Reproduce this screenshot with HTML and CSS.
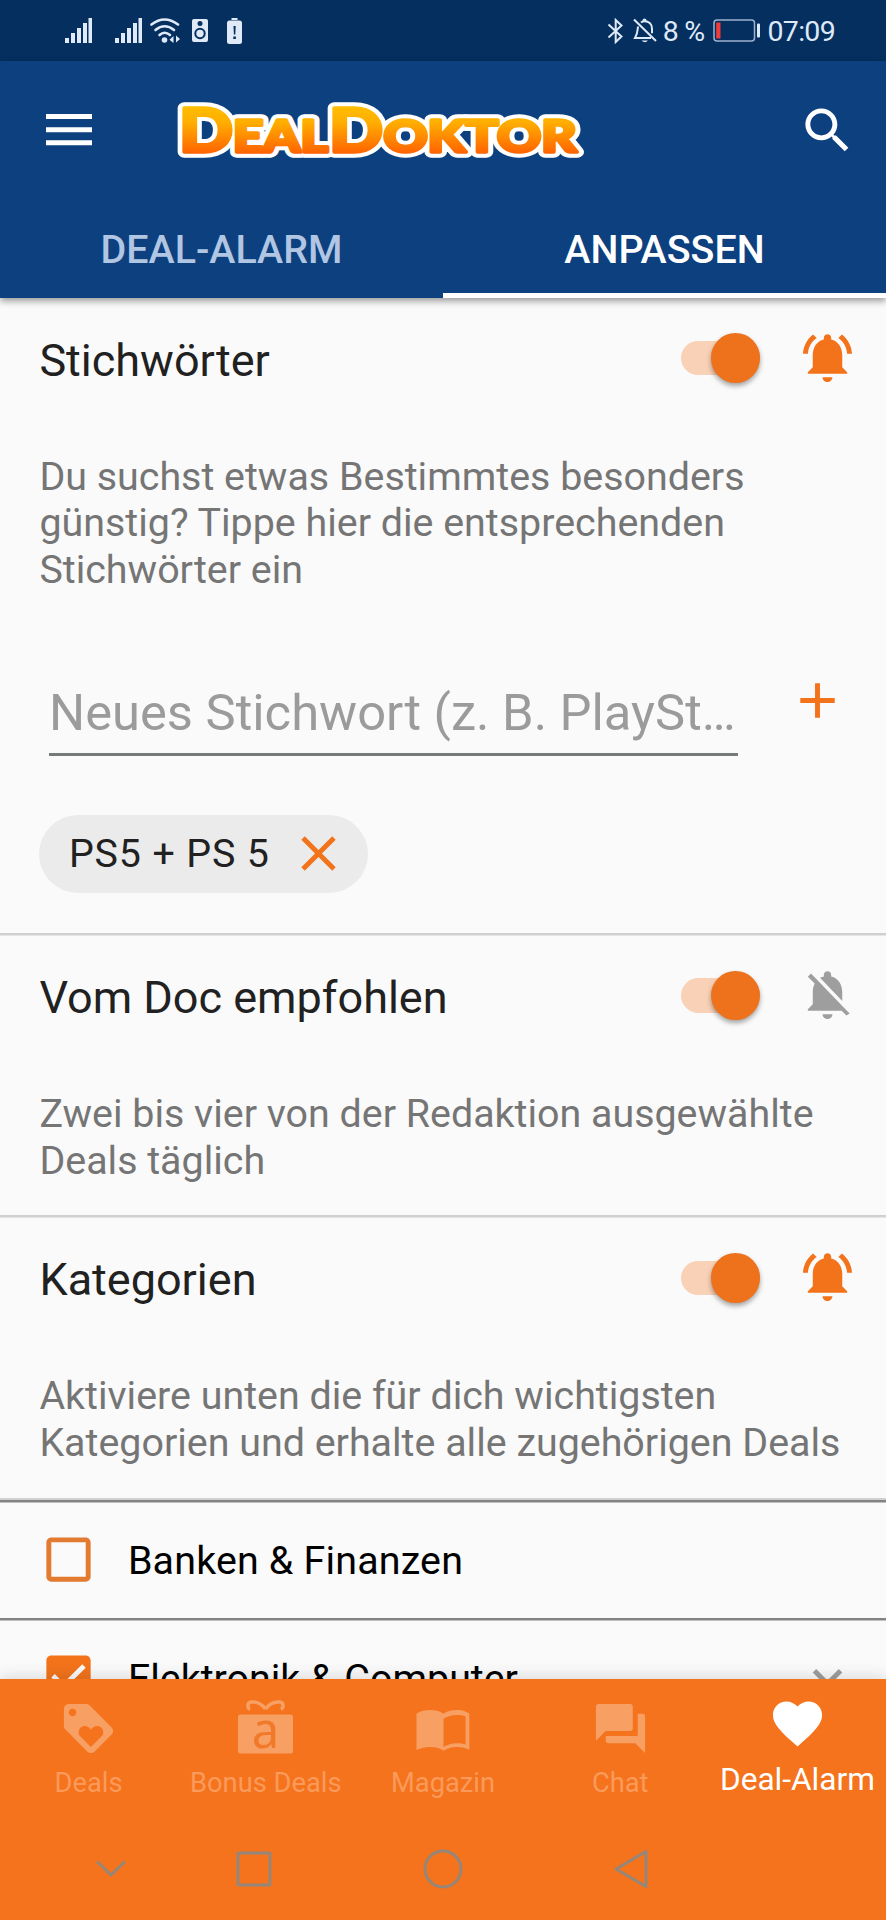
FILE: index.html
```html
<!DOCTYPE html>
<html lang="de">
<head>
<meta charset="utf-8">
<title>DealDoktor – Deal-Alarm</title>
<link rel="stylesheet" href="styles.css">
</head>
<body>
<svg class="defs" width="0" height="0" aria-hidden="true">
  <symbol id="bell-active" viewBox="0 0 24 24"><path d="M7.58 4.08L6.15 2.65C3.75 4.48 2.17 7.3 2.03 10.5h2c.15-2.65 1.51-4.97 3.55-6.42zm12.39 6.42h2c-.15-3.2-1.73-6.02-4.12-7.85l-1.42 1.43c2.02 1.45 3.39 3.77 3.54 6.42zM18 11c0-3.07-1.64-5.64-4.5-6.32V4c0-.83-.67-1.5-1.5-1.5s-1.5.67-1.5 1.5v.68C7.63 5.36 6 7.92 6 11v5l-2 2v.6h16V18l-2-2v-5zm-6 11c.14 0 .27-.01.4-.04.65-.14 1.18-.58 1.44-1.18.1-.24.15-.5.15-.78h-4c.01 1.1.9 2 2.01 2z"/></symbol>
  <symbol id="bell-off" viewBox="0 0 24 24"><path d="M20 18.69L7.84 6.14 5.27 3.49 4 4.76l2.8 2.8v.01c-.52.99-.8 2.16-.8 3.42v5l-2 2v.6h13.73l2 2L21 19.72l-1-1.03zM12 22c1.11 0 2-.89 2-2h-4c0 1.11.89 2 2 2zm6-7.32V11c0-3.08-1.64-5.64-4.5-6.32V4c0-.83-.67-1.5-1.5-1.5s-1.5.67-1.5 1.5v.68c-.15.03-.29.08-.42.12-.1.03-.2.07-.3.11h-.01c-.01 0-.01 0-.02.01-.23.09-.46.2-.68.31 0 0-.01 0-.01.01L18 14.68z"/></symbol>
  <symbol id="signal" viewBox="0 0 27 25"><path d="M0 20h4v5H0zM6 15h4v10H6zM12 10h4v15h-4zM18 5h4v20h-4zM23.500 0h3.500v25h-3.500z"/></symbol>
</svg>
<div class="screen">
  <div class="statusbar">
    <svg class="st-signal" viewBox="0 0 27 25"><use href="#signal"/></svg>
    <svg class="st-signal st-signal-2" viewBox="0 0 27 25"><use href="#signal"/></svg>
    <svg class="st-wifi" viewBox="0 0 30 25"><g fill="none" stroke="#dfe9f7" stroke-width="2.600" stroke-linecap="round"><path d="M1.500 6.500Q14.500-3.500 28 6.500"/><path d="M5.500 12Q14.500 4.500 24 12"/><path d="M9.500 17Q14.500 12.500 20 17"/></g><circle cx="14.500" cy="22" r="2.800" fill="#dfe9f7"/><path d="M23.500 18v7l-4-3.200zM26 17.500v7l4-3.500z" fill="#dfe9f7"/></svg>
    <svg class="st-speaker" viewBox="0 0 16 23"><rect width="16" height="23" rx="2" fill="#dfe9f7"/><circle cx="8" cy="4.500" r="2.500" fill="#052f5f"/><circle cx="8" cy="14.500" r="4.700" fill="none" stroke="#052f5f" stroke-width="2"/></svg>
    <svg class="st-batt-alert" viewBox="0 0 15 26"><path d="M4.500 0h6v2h-6z" fill="#dfe9f7"/><rect y="2.500" width="15" height="23.500" rx="2.500" fill="#dfe9f7"/><path d="M6.500 8h2.200l-.4 8.500H6.900zM6.300 18.500h2.600v2.500H6.300z" fill="#052f5f"/></svg>
    <span class="st-space"></span>
    <svg class="st-bt" viewBox="0 0 16 26"><path d="M1 6.500l13 12L8.200 24V2L14 7.500 1 19.500" fill="none" stroke="#dfe9f7" stroke-width="2"/></svg>
    <svg class="st-mute" viewBox="0 0 24 26"><g fill="none" stroke="#dfe9f7" stroke-width="2"><path d="M1 1.500L23 23"/><path d="M8 4.500C9 3.500 10 3.200 11.500 3.200c4.500 0 7.500 3 7.500 7.500v4.500M5 8.500c-.6 6.500-.5 7.500-3 11.500h16"/><path d="M10 3q1.500-3 3 0"/></g><path d="M8.500 22.500h6.500q-3 3.500-6.500 0z" fill="#dfe9f7"/></svg>
    <span class="st-pct">8&nbsp;%</span>
    <svg class="st-batt" viewBox="0 0 48 23"><rect x="1" y="1" width="40.500" height="21" rx="3" fill="none" stroke="#9fb3cf" stroke-width="1.500"/><rect x="3.200" y="3.500" width="4.300" height="16" fill="#ee3b3b"/><rect x="44" y="4.500" width="3" height="14" rx="1" fill="#dfe9f7"/></svg>
    <span class="st-time">07:09</span>
  </div>

  <header class="header">
    <div class="appbar">
      <svg class="menu" viewBox="0 0 46 32"><path d="M0 0h46v5H0zM0 13.200h46v5H0zM0 26.300h46v5H0z" fill="#fff"/></svg>
      <svg class="logo" viewBox="0 0 420 110">
        <defs>
          <linearGradient id="gold" gradientUnits="userSpaceOnUse" x1="0" y1="31" x2="0" y2="78"><stop offset="0" stop-color="#ffbe00"/><stop offset=".35" stop-color="#ffae00"/><stop offset="1" stop-color="#ff6400"/></linearGradient>
        </defs>
        <g class="logo-back">
          <text class="big" x="6" y="76.500" textLength="54" lengthAdjust="spacingAndGlyphs">D</text>
          <text class="small" x="60" y="76.500" textLength="95" lengthAdjust="spacingAndGlyphs">EAL</text>
          <text class="big" x="156" y="76.500" textLength="54" lengthAdjust="spacingAndGlyphs">D</text>
          <text class="small" x="210.500" y="76.500" textLength="193" lengthAdjust="spacingAndGlyphs">OKTOR</text>
        </g>
        <g class="logo-front" fill="url(#gold)" stroke="url(#gold)" aria-hidden="true">
          <text class="big" x="6" y="76.500" textLength="54" lengthAdjust="spacingAndGlyphs">D</text>
          <text class="small" x="60" y="76.500" textLength="95" lengthAdjust="spacingAndGlyphs">EAL</text>
          <text class="big" x="156" y="76.500" textLength="54" lengthAdjust="spacingAndGlyphs">D</text>
          <text class="small" x="210.500" y="76.500" textLength="193" lengthAdjust="spacingAndGlyphs">OKTOR</text>
        </g>
      </svg>
      <svg class="search" viewBox="0 0 24 24" fill="#fff"><path d="M15.500 14h-.79l-.28-.27C15.410 12.590 16 11.110 16 9.500 16 5.910 13.090 3 9.500 3S3 5.910 3 9.500 5.910 16 9.500 16c1.610 0 3.090-.59 4.230-1.570l.27.280v.79l5 4.990L20.490 19l-4.990-5zm-6 0C7.010 14 5 11.990 5 9.500S7.010 5 9.500 5 14 7.010 14 9.500 11.990 14 9.500 14z"/></svg>
    </div>
    <nav class="tabs">
      <div class="tab">DEAL-ALARM</div>
      <div class="tab tab-active">ANPASSEN</div>
    </nav>
  </header>

  <main class="content">
    <section class="section">
      <div class="section-head">
        <h2>Stichwörter</h2>
        <div class="switch"><span class="thumb"></span></div>
        <svg class="icon orange" viewBox="0 0 24 24"><use href="#bell-active"/></svg>
      </div>
      <p class="desc">Du suchst etwas Bestimmtes besonders<br>günstig? Tippe hier die entsprechenden<br>Stichwörter ein</p>
      <div class="entry">
        <div class="field">Neues Stichwort (z. B. PlaySt…</div>
        <svg class="icon orange add" viewBox="0 0 24 24"><path d="M19 13h-6v6h-2v-6H5v-2h6V5h2v6h6v2z"/></svg>
      </div>
      <div class="chip"><span>PS5 + PS 5</span><svg class="icon orange" viewBox="0 0 24 24"><path d="M19 6.410L17.590 5 12 10.590 6.410 5 5 6.410 10.590 12 5 17.590 6.410 19 12 13.410 17.590 19 19 17.590 13.410 12z"/></svg></div>
    </section>
    <section class="section">
      <div class="section-head">
        <h2>Vom Doc empfohlen</h2>
        <div class="switch"><span class="thumb"></span></div>
        <svg class="icon gray" viewBox="0 0 24 24"><use href="#bell-off"/></svg>
      </div>
      <p class="desc">Zwei bis vier von der Redaktion ausgewählte<br>Deals täglich</p>
    </section>
    <section class="section">
      <div class="section-head">
        <h2>Kategorien</h2>
        <div class="switch"><span class="thumb"></span></div>
        <svg class="icon orange" viewBox="0 0 24 24"><use href="#bell-active"/></svg>
      </div>
      <p class="desc">Aktiviere unten die für dich wichtigsten<br>Kategorien und erhalte alle zugehörigen Deals</p>
    </section>
    <div class="category">
      <svg class="icon check" viewBox="0 0 24 24"><path d="M19 5v14H5V5h14m0-2H5c-1.100 0-2 .9-2 2v14c0 1.100.9 2 2 2h14c1.100 0 2-.9 2-2V5c0-1.100-.9-2-2-2z"/></svg>
      <span class="spaced">Banken &amp; Finanzen</span>
    </div>
    <div class="category">
      <svg class="icon orange" viewBox="0 0 24 24"><path d="M19 3H5c-1.110 0-2 .9-2 2v14c0 1.100.89 2 2 2h14c1.110 0 2-.9 2-2V5c0-1.100-.89-2-2-2zm-9 14l-5-5 1.410-1.410L10 14.170l7.590-7.590L19 8l-9 9z"/></svg>
      <span>Elektronik &amp; Computer</span>
      <svg class="icon gray expand" viewBox="0 0 24 24"><path d="M16.590 8.590L12 13.170 7.410 8.590 6 10l6 6 6-6z"/></svg>
    </div>
  </main>

  <nav class="bottomnav">
    <div class="item"><svg class="icon" viewBox="0 0 24 24"><path d="M21.410 11.580l-9-9C12.050 2.220 11.550 2 11 2H4c-1.100 0-2 .9-2 2v7c0 .55.22 1.050.59 1.420l9 9c.36.360.86.580 1.410.580.550 0 1.050-.220 1.410-.590l7-7c.370-.360.590-.860.590-1.410 0-.550-.230-1.060-.590-1.420zM5.500 7C4.670 7 4 6.330 4 5.500S4.670 4 5.500 4 7 4.670 7 5.500 6.330 7 5.500 7zm11.770 8.270L13 19.540l-4.270-4.270C8.280 14.810 8 14.190 8 13.500c0-1.380 1.120-2.500 2.500-2.500.690 0 1.320.280 1.770.740l.730.720.730-.730c.450-.450 1.080-.730 1.770-.730 1.380 0 2.500 1.120 2.500 2.500 0 .690-.280 1.320-.730 1.770z"/></svg><span>Deals</span></div>
    <div class="item"><svg class="icon" viewBox="0 0 59 59"><rect x="2" y="15.500" width="55" height="39" rx="2.500"/><path d="M29.500 10C25 4 20 2.500 15.500 3c-5 .6-4 6-1.500 7.500" fill="none" stroke="currentColor" stroke-width="3.500"/><path d="M29.500 10C34 4 39 2.500 43.500 3c5 .6 4 6 1.500 7.500" fill="none" stroke="currentColor" stroke-width="3.500"/><text class="gift-a" x="29.500" y="49" text-anchor="middle">a</text></svg><span>Bonus Deals</span></div>
    <div class="item"><svg class="icon" viewBox="0 0 24 24"><path d="M21 5c-1.110-.350-2.330-.500-3.500-.500-1.950 0-4.050.400-5.500 1.500-1.450-1.100-3.550-1.500-5.500-1.500S2.450 4.900 1 6v14.650c.100.050 2.450-1.150 5.500-1.150 1.950 0 4.050.400 5.500 1.500 1.350-.850 3.800-1.500 5.500-1.500 1.650 0 3.350.300 4.750 1.050.100.050.250.050.250.050V6c-.600-.450-1.250-.750-2-1zm0 13.500c-1.100-.350-2.300-.500-3.500-.500-1.700 0-4.150.650-5.500 1.500V8c1.350-.850 3.800-1.500 5.500-1.500 1.200 0 2.400.150 3.500.500v11.500z"/></svg><span>Magazin</span></div>
    <div class="item"><svg class="icon" viewBox="0 0 24 24"><path d="M21 6h-2v9H6v2c0 .55.450 1 1 1h11l4 4V7c0-.550-.450-1-1-1zm-4 6V3c0-.550-.450-1-1-1H3c-.550 0-1 .450-1 1v14l4-4h10c.550 0 1-.450 1-1z"/></svg><span>Chat</span></div>
    <div class="item item-active"><svg class="icon" viewBox="0 0 24 24"><path d="M12 21.350l-1.450-1.320C5.400 15.360 2 12.280 2 8.500 2 5.420 4.420 3 7.500 3c1.740 0 3.410.810 4.500 2.090C13.090 3.810 14.760 3 16.500 3 19.580 3 22 5.420 22 8.500c0 3.780-3.400 6.860-8.550 11.540L12 21.350z"/></svg><span>Deal-Alarm</span></div>
  </nav>
  <div class="sysnav">
    <svg viewBox="0 0 40 40"><path d="M6 12.500l14 13.500 14-13.500"/></svg>
    <svg viewBox="0 0 40 40"><rect x="4" y="4" width="32" height="32" rx="1"/></svg>
    <svg viewBox="0 0 40 40"><circle cx="20" cy="20" r="18"/></svg>
    <svg viewBox="0 0 40 40"><path d="M5 20L35 2.500v35z" stroke-linejoin="round"/></svg>
  </div>
</div>
</body>
</html>
```
FILE: styles.css
```css
* { box-sizing: border-box; }
body { margin: 0; font-family: Roboto, sans-serif; background: #fafafa; }
svg { display: block; flex: none; }
.defs { position: absolute; }
.screen { width: 886px; height: 1920px; display: flex; flex-direction: column; overflow: hidden; }
.icon { width: 59px; height: 59px; fill: currentColor; }
.orange { color: #f3731b; }
.gray { color: #9e9e9e; }
.check { color: #e27a30; }

.statusbar { height: 61px; flex: none; background: #052f5f; color: #dfe9f7; display: flex; align-items: center; padding: 0 51px 0 65px; font-size: 28.500px; letter-spacing: -.7px; }
.st-signal { width: 27px; height: 25px; fill: #dfe9f7; }
.st-signal-2 { margin-left: 23px; }
.st-wifi { width: 30px; height: 25px; margin-left: 8px; }
.st-speaker { width: 16px; height: 23px; margin-left: 12px; }
.st-batt-alert { width: 15px; height: 26px; margin-left: 19px; }
.st-space { flex: 1; }
.st-bt { width: 17px; height: 26px; }
.st-mute { width: 24px; height: 26px; margin-left: 9px; }
.st-pct { margin-left: 6px; padding-top: 1px; }
.st-batt { width: 48px; height: 23px; margin-left: 8px; }
.st-time { margin-left: 7px; padding-top: 1px; }

.header { height: 237px; flex: none; background: #0d407f; position: relative; z-index: 2; box-shadow: 0 3px 7px rgba(0, 0, 0, .4); display: flex; flex-direction: column; }
.appbar { height: 138px; display: flex; align-items: center; padding: 0 29px 0 46px; }
.menu { width: 46px; height: 32px; }
.logo { width: 420px; height: 110px; margin-left: 81px; font-family: Lato, sans-serif; font-weight: 900; stroke-linejoin: round; }
.big { font-size: 61px; }
.small { font-size: 43.500px; }
.logo-back { fill: #fff; stroke: #fff; stroke-width: 11.500px; }
.logo-front { stroke-width: 3.500px; }
.search { width: 59px; height: 59px; margin-left: auto; }
.tabs { flex: 1; display: flex; }
.tab { flex: 1; display: flex; align-items: center; justify-content: center; padding-top: 7px; border-bottom: 5px solid transparent; font-weight: 500; font-size: 39.400px; color: #b0c6e2; }
.tab-active { color: #fff; border-color: #fff; }

.content { flex: 1; min-height: 0; overflow: hidden; background: #fafafa; }
.section { padding: 0 0 33.400px; background: linear-gradient(#d0d0d0, #d0d0d0) bottom / 100% 2.500px no-repeat; }
.section-head { height: 118px; display: flex; align-items: center; padding: 0 29.500px 0 39.400px; }
h2 { flex: 1; margin: 0; padding-top: 7px; font-size: 45px; font-weight: 400; line-height: 54px; color: #212121; }
.switch { width: 79px; height: 34.500px; border-radius: 18px; background: #f9d1b7; margin: 2px 37.500px 0 0; display: flex; align-items: center; justify-content: flex-end; }
.thumb { width: 49.500px; height: 49.500px; flex: none; border-radius: 50%; background: #ee711b; box-shadow: 0 3px 5px rgba(0, 0, 0, .35); }
.desc { margin: 37.500px 0 0; padding-left: 39.400px; font-size: 39.400px; line-height: 46.700px; color: #757575; white-space: nowrap; }
.entry { display: flex; align-items: flex-start; padding: 77px 39px 0 49px; justify-content: space-between; }
.field { width: 689px; height: 85px; border-bottom: 3px solid #777b77; font-size: 50.700px; line-height: 84px; color: #9b9b9b; white-space: nowrap; }
.chip { margin: 59px 0 9.200px 39.400px; width: 329px; height: 78.500px; border-radius: 40px; background: #ebebeb; display: flex; align-items: center; justify-content: space-between; padding: 0 20px 0 29.500px; font-size: 39.400px; letter-spacing: .85px; color: #212121; }
.category { height: 118.100px; display: flex; align-items: center; padding: 0 29.500px 0 39.400px; background: linear-gradient(#838383 2px, #c0c0c0 2px) top / 100% 3px no-repeat; font-size: 39.400px; color: #000; }
.category span { margin-left: 29.500px; padding-top: 2px; }
.category .spaced { letter-spacing: .18px; }
.expand { margin-left: auto; }

.bottomnav { height: 138px; flex: none; position: relative; z-index: 2; background: #f5731c; box-shadow: 0 -3px 14px rgba(0, 0, 0, .12); display: flex; }
.item { flex: 1; display: flex; flex-direction: column; align-items: center; padding-top: 19.500px; color: #f89f63; font-size: 27.300px; white-space: nowrap; }
.item span { margin-top: 8px; line-height: 34px; color: #fa9a5b; }
.item-active { padding-top: 14.500px; color: #fff; font-size: 31.600px; }
.item-active span { margin-top: 10px; color: #fff; }
.gift-a { font-family: "Noto Sans", sans-serif; font-size: 49px; fill: #f07a2a; }
.sysnav { flex: none; height: 103px; position: relative; z-index: 3; background: #f5731c; display: flex; align-items: center; padding-left: 91px; }
.sysnav svg { width: 40px; height: 40px; fill: none; stroke: #94877a; stroke-width: 3; }
.sysnav svg + svg { margin-left: 103px; }
.sysnav svg:nth-child(3) { margin-left: 149px; }
.sysnav svg:nth-child(4) { margin-left: 148px; }
```
